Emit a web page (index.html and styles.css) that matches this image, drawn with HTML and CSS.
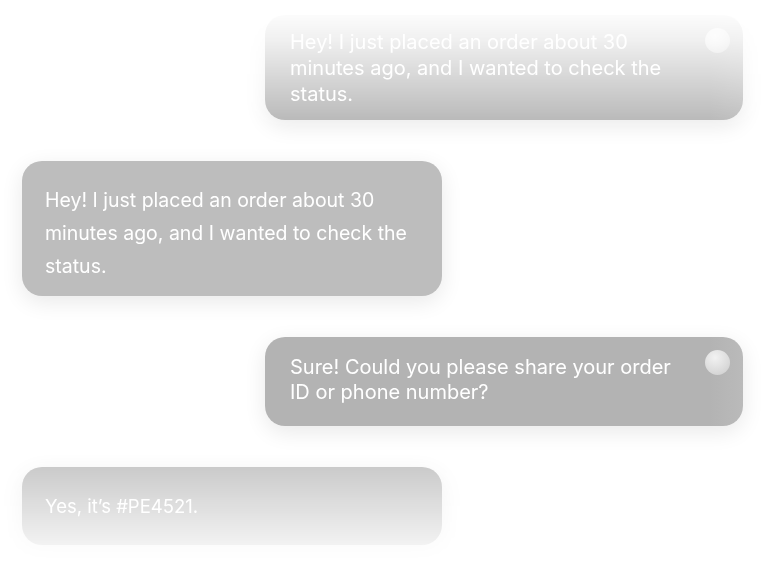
FILE: index.html
```html
<!DOCTYPE html>
<html lang="en">
<head>
<meta charset="utf-8">
<title>Chat</title>
<link rel="stylesheet" href="styles.css">
</head>
<body>
<main class="chat">
  <div class="bubble bubble--out bubble--first">
    <p class="bubble__text">Hey! I just placed an order about 30 minutes ago, and I wanted to check the status.</p>
    <span class="avatar"></span>
  </div>
  <div class="bubble bubble--in bubble--tall">
    <p class="bubble__text">Hey! I just placed an order about 30 minutes ago, and I wanted to check the status.</p>
  </div>
  <div class="bubble bubble--out bubble--reply">
    <p class="bubble__text">Sure! Could you please share your order ID or phone number?</p>
    <span class="avatar"></span>
  </div>
  <div class="bubble bubble--in bubble--last">
    <p class="bubble__text">Yes, it’s #PE4521.</p>
  </div>
</main>
</body>
</html>
```
FILE: styles.css
```css
* { box-sizing: border-box; }
html, body { margin: 0; padding: 0; background: #ffffff; }
body {
  width: 778px;
  height: 568px;
  overflow: hidden;
  font-family: "Inter", "Noto Sans", sans-serif;
}
.chat {
  display: flex;
  flex-direction: column;
  gap: 41px;
  padding: 15px 35px 0 22px;
  height: 568px;
  -webkit-mask-image: linear-gradient(to bottom, rgba(0,0,0,0) 8px, rgba(0,0,0,0.2) 40px, #000 130px, #000 441px, rgba(0,0,0,0) 570px);
  mask-image: linear-gradient(to bottom, rgba(0,0,0,0) 8px, rgba(0,0,0,0.2) 40px, #000 130px, #000 441px, rgba(0,0,0,0) 570px);
}
.bubble {
  display: flex;
  align-items: flex-start;
  border-radius: 20px;
  background: #b4b4b4;
  box-shadow: 0 6px 22px rgba(0, 0, 0, 0.09);
  color: #ffffff;
}
.bubble__text {
  margin: 0;
  letter-spacing: 0;
}
.bubble--out {
  align-self: flex-end;
  width: 478px;
  padding: 13px 13px 0 25px;
  justify-content: space-between;
  background: linear-gradient(to right, #b3b3b3 0%, #b3b3b3 93%, #bababa 100%);
}
.bubble--out .bubble__text { width: 396px; font-size: 20px; line-height: 25px; }
.bubble--in {
  align-self: flex-start;
  width: 420px;
  background: #bdbdbd;
  padding: 0 22px 0 23px;
}
.bubble--first { height: 105px; }
.bubble--first .bubble__text { padding-top: 1px; line-height: 26px; }
.bubble--tall { height: 135px; padding-top: 23px; }
.bubble--tall .bubble__text { font-size: 19.5px; line-height: 33px; }
.bubble--reply { height: 89px; }
.bubble--reply .bubble__text { padding-top: 5px; }
.bubble--last { height: 78px; align-items: center; }
.bubble--last .bubble__text { font-size: 18.5px; line-height: 26px; padding-bottom: 1px; }
.avatar {
  flex: none;
  width: 25px;
  height: 25px;
  border-radius: 50%;
  background: radial-gradient(circle at 40% 30%, #f2f2f2 0%, #dddddd 55%, #cbcbcb 100%);
}
```
